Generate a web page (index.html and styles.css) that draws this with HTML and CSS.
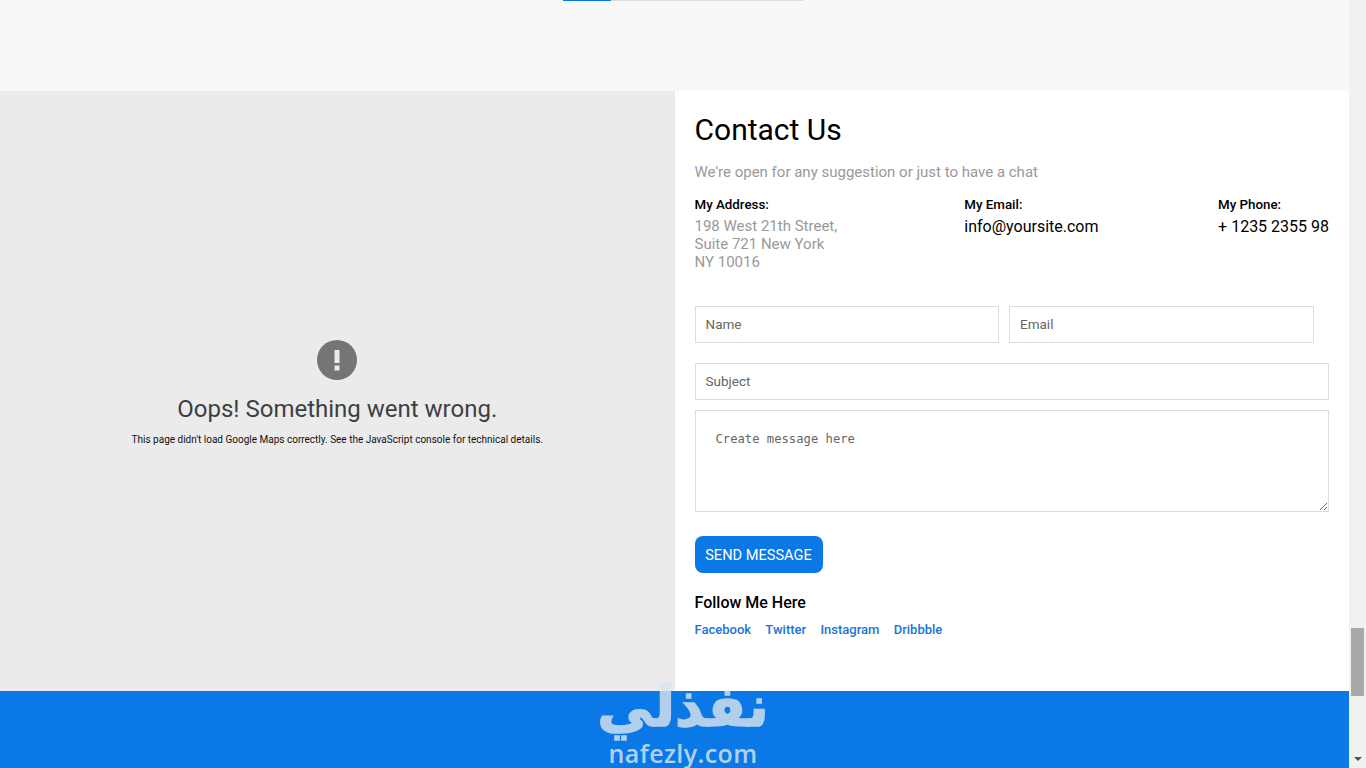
FILE: index.html
```html
<!DOCTYPE html>
<html lang="en">
<head>
    <meta charset="UTF-8">
    <meta name="viewport" content="width=device-width, initial-scale=1.0">
    <title>Contact Us</title>
    <link rel="stylesheet" href="styles.css">
</head>
<body>
    <div class="page">
        <div class="top-section">
            <div class="progress">
                <div class="progress-fill"></div>
            </div>
        </div>

        <div class="contact-section">
            <div class="map-box">
                <svg class="map-icon" width="40" height="40" viewBox="0 0 40 40">
                    <circle cx="20" cy="20" r="20" fill="#757575"/>
                    <rect x="17.5" y="10" width="5" height="13" fill="#ebebeb"/>
                    <rect x="17.5" y="25.5" width="5" height="5" fill="#ebebeb"/>
                </svg>
                <h2 class="map-title">Oops! Something went wrong.</h2>
                <p class="map-text">This page didn't load Google Maps correctly. See the JavaScript console for technical details.</p>
            </div>

            <div class="contact-box">
                <h1 class="contact-title">Contact Us</h1>
                <p class="contact-lead">We're open for any suggestion or just to have a chat</p>

                <div class="info-row">
                    <div class="info-col">
                        <div class="info-label">My Address:</div>
                        <div class="info-value muted">198 West 21th Street,<br>Suite 721 New York<br>NY 10016</div>
                    </div>
                    <div class="info-col">
                        <div class="info-label">My Email:</div>
                        <div class="info-value">info@yoursite.com</div>
                    </div>
                    <div class="info-col">
                        <div class="info-label">My Phone:</div>
                        <div class="info-value">+ 1235 2355 98</div>
                    </div>
                </div>

                <form class="contact-form">
                    <div class="form-row">
                        <input type="text" class="form-control" placeholder="Name">
                        <input type="text" class="form-control" placeholder="Email">
                    </div>
                    <input type="text" class="form-control subject" placeholder="Subject">
                    <textarea class="form-control message" placeholder="Create message here"></textarea>
                    <button type="button" class="btn-send">SEND MESSAGE</button>
                </form>

                <h3 class="follow-title">Follow Me Here</h3>
                <div class="follow-links">
                    <a href="#">Facebook</a>
                    <a href="#">Twitter</a>
                    <a href="#">Instagram</a>
                    <a href="#">Dribbble</a>
                </div>
            </div>
        </div>

        <div class="footer"></div>
    </div>

    <div class="scrollbar">
        <div class="scroll-thumb"></div>
        <div class="scroll-arrow"></div>
    </div>

    <div class="watermark">
        <div class="watermark-ar" lang="ar" dir="rtl">نفذلي</div>
        <div class="watermark-en">nafezly.com</div>
    </div>
</body>
</html>
```

FILE: styles.css
```css
* {
    margin: 0;
    padding: 0;
    box-sizing: border-box;
}

html, body {
    height: 768px;
    overflow: hidden;
}

body {
    display: flex;
    font-family: Roboto, "Liberation Sans", sans-serif;
    background-color: #ffffff;
    color: #000000;
}

.page {
    width: 1349px;
    display: flex;
    flex-direction: column;
}

/* top strip */
.top-section {
    height: 91px;
    background-color: #f8f8f8;
    padding-left: 563px;
}

.progress {
    width: 241px;
    height: 1px;
    background-color: #dcdcdc;
}

.progress-fill {
    width: 48px;
    height: 1px;
    background-color: #0a78e6;
}

/* map + contact */
.contact-section {
    display: flex;
    height: 600px;
}

.map-box {
    width: 674.5px;
    background-color: #ebebeb;
    display: flex;
    flex-direction: column;
    align-items: center;
    padding-top: 249px;
}

.map-icon {
    display: block;
}

.map-title {
    font-size: 24px;
    font-weight: 400;
    line-height: 28px;
    color: #3c4043;
    margin-top: 15px;
}

.map-text {
    font-size: 10px;
    line-height: 14px;
    color: #111111;
    margin-top: 10px;
}

.contact-box {
    width: 674.5px;
    padding: 21px 20px 0 20px;
}

.contact-title {
    font-size: 30px;
    font-weight: 400;
    line-height: 36px;
}

.contact-lead {
    font-size: 15px;
    line-height: 24px;
    color: #999999;
    margin-top: 12px;
}

.info-row {
    display: flex;
    margin-top: 11px;
}

.info-col:first-child {
    width: 270px;
}

.info-col:nth-child(2) {
    width: 254px;
}

.info-col:last-child {
    flex: 1;
    white-space: nowrap;
}

.info-label {
    font-size: 13.33px;
    font-weight: 500;
    line-height: 20px;
}

.info-value {
    font-size: 16px;
    line-height: 18px;
    margin-top: 3px;
}

.info-value.muted {
    font-size: 15px;
    margin-top: 2px;
    color: #999999;
}

.contact-form {
    margin-top: 35px;
}

.form-row {
    display: flex;
    gap: 10px;
    margin-bottom: 20px;
}

.form-row .form-control {
    width: 304.5px;
}

.form-control {
    display: block;
    width: 100%;
    height: 37px;
    padding: 0 10px 1px;
    border: 1px solid #dddddd;
    background-color: #ffffff;
    font-family: Roboto, sans-serif;
    font-size: 13.5px;
    color: #333333;
}

.form-control::placeholder {
    color: #666666;
    opacity: 1;
}

.subject {
    margin-bottom: 10px;
}

.message {
    height: 102px;
    padding: 20px;
    font-family: "DejaVu Sans Mono", monospace;
    font-size: 12.2px;
    line-height: 16px;
}

.btn-send {
    display: block;
    width: 128px;
    height: 37px;
    margin-top: 24px;
    border: none;
    border-radius: 8px;
    background-color: #0a78e6;
    color: #ffffff;
    font-family: Roboto, sans-serif;
    font-size: 14.6px;
}

.follow-title {
    font-size: 16px;
    font-weight: 500;
    line-height: 20px;
    margin-top: 20px;
}

.follow-links {
    display: flex;
    gap: 14.3px;
    margin-top: 8px;
}

.follow-links a {
    font-size: 13px;
    font-weight: 500;
    line-height: 18px;
    color: #1a73d8;
    text-decoration: none;
}

.footer {
    height: 77px;
    background-color: #0a78e6;
}

/* scrollbar */
.scrollbar {
    position: relative;
    width: 17px;
    height: 768px;
    background-color: #f1f1f1;
}

.scroll-thumb {
    position: absolute;
    left: 2px;
    top: 628px;
    width: 13px;
    height: 68px;
    background-color: #a8a8a8;
}

.scroll-arrow {
    position: absolute;
    left: 5px;
    top: 757px;
    width: 0;
    height: 0;
    border-left: 4px solid transparent;
    border-right: 4px solid transparent;
    border-top: 4px solid #505050;
}

/* watermark over the footer */
.watermark {
    position: absolute;
    left: 583px;
    top: 674px;
    width: 200px;
    text-align: center;
    color: #dde6ee;
    opacity: 0.8;
    pointer-events: none;
}

.watermark-ar {
    font-family: "DejaVu Sans", sans-serif;
    font-size: 56px;
    font-weight: 700;
    line-height: 66px;
    -webkit-text-stroke: 1.5px #dde6ee;
}

.watermark-en {
    font-family: "Open Sans", sans-serif;
    font-size: 25px;
    font-weight: 600;
    line-height: 26px;
    letter-spacing: 0.4px;
}
```
